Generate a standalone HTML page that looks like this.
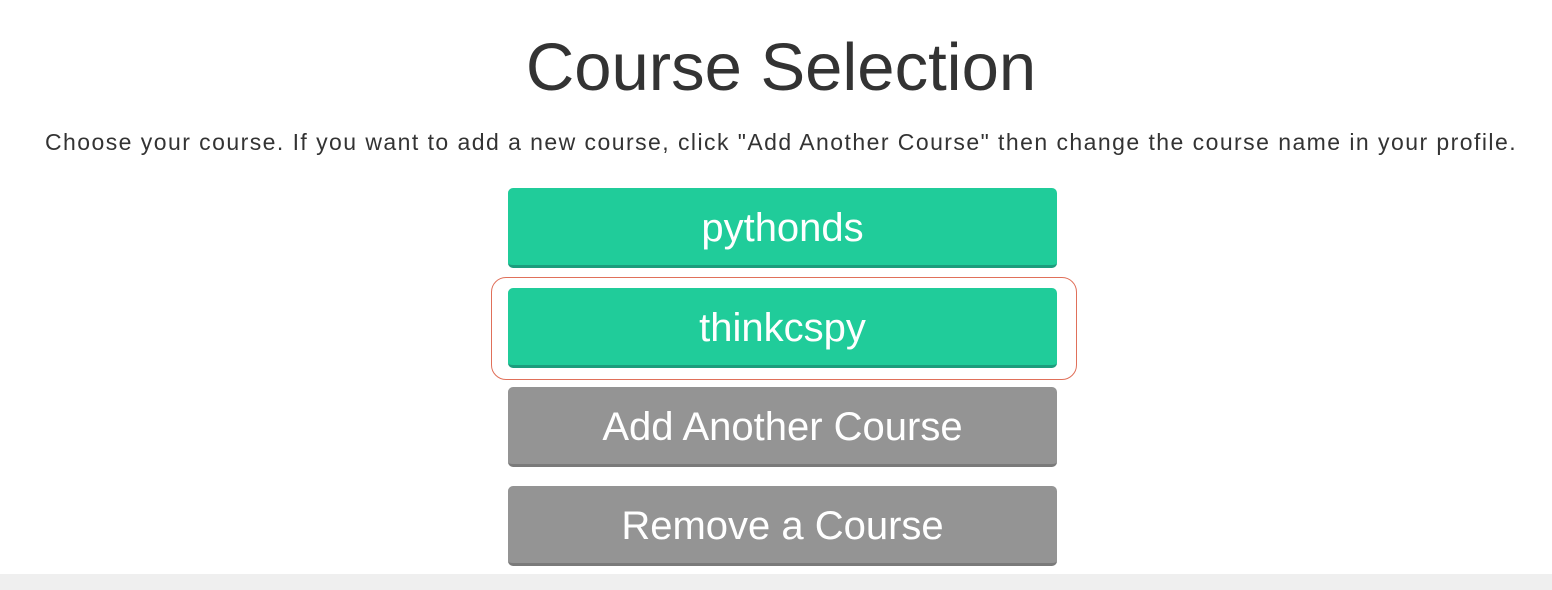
<!DOCTYPE html>
<html><head><style>
html,body{margin:0;padding:0;background:#fff;width:1552px;height:590px;overflow:hidden;font-family:"Liberation Sans",Arial,sans-serif;position:relative}
h1{position:absolute;top:28px;left:0;width:1562px;text-align:center;margin:0;font-weight:normal;font-size:67px;color:#333;line-height:80px}
p{position:absolute;top:127px;left:0;width:1562px;text-align:center;margin:0;font-size:23px;letter-spacing:1.45px;color:#333;line-height:30px}
.b{position:absolute;left:508px;width:549px;height:80px;border-radius:5px;color:#fff;text-align:center;font-size:40px;line-height:80px;box-sizing:border-box}
.g{background:#20cc9a;border-bottom:3px solid #1b9d7d}
.r{background:#949494;border-bottom:3px solid #7a7a7a}
.o{position:absolute;left:491px;top:277px;width:586px;height:103px;box-sizing:border-box;border:1.5px solid #e0705a;border-radius:15px}
.f{position:absolute;left:0;top:574px;width:1552px;height:16px;background:#efefef}
</style></head><body>
<h1>Course Selection</h1>
<p>Choose your course. If you want to add a new course, click "Add Another Course" then change the course name in your profile.</p>
<div class="b g" style="top:188px">pythonds</div>
<div class="o"></div>
<div class="b g" style="top:288px">thinkcspy</div>
<div class="b r" style="top:387px">Add Another Course</div>
<div class="b r" style="top:486px">Remove a Course</div>
<div class="f"></div>
</body></html>
